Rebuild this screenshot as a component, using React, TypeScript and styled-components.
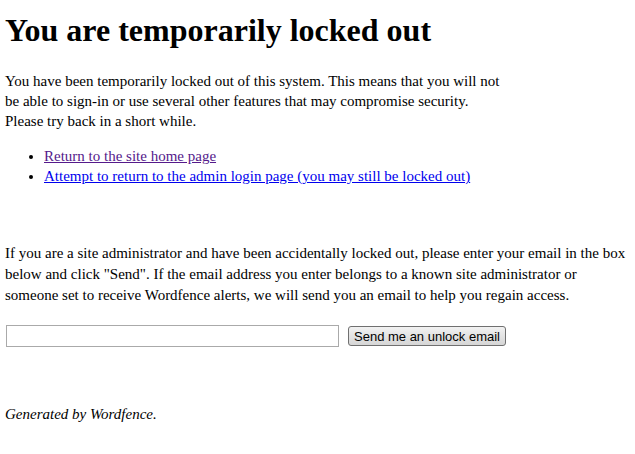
import { FC } from 'react';
import styled, { createGlobalStyle } from 'styled-components';

const GlobalStyle = createGlobalStyle`
  body {
    margin: 0;
    background: #fff;
    color: #000;
    font-family: "Liberation Serif", "Times New Roman", serif;
    font-size: 15px;
  }
`;

const Page = styled.div`
  padding: 0 5px;
`;

const Title = styled.h1`
  font-size: 32px;
  font-weight: bold;
  margin: 12px 0 23px;
  line-height: 36px;
`;

const Intro = styled.p`
  max-width: 495px;
  margin: 0 0 15px;
  line-height: 20px;
`;

const LinkList = styled.ul`
  margin: 0 0 57px;
  padding-left: 39px;
  line-height: 20px;
`;

const Link = styled.a<{ visited?: boolean }>`
  color: ${({ visited }) => (visited ? '#551a8b' : '#0000ee')};
  text-decoration: underline;
`;

const Notice = styled.p`
  margin: 0 0 19px;
  line-height: 21px;
`;

const Form = styled.form`
  display: flex;
  align-items: center;
  gap: 9px;
  margin-left: 1px;
`;

const EmailInput = styled.input`
  width: 333px;
  height: 22px;
  box-sizing: border-box;
  border: 1px solid #aaa;
  padding: 2px;
`;

const SendButton = styled.button`
  height: 20px;
  box-sizing: border-box;
  padding: 0 5px;
  font-family: "Liberation Sans", Arial, sans-serif;
  font-size: 13px;
  color: #000;
  border: 1px solid #707070;
  border-radius: 3px;
  background: linear-gradient(#f2f2f2, #e3e3e3 50%, #d6d6d6);
`;

const Footer = styled.p`
  margin: 59px 0 0;
  font-style: italic;
`;

const App: FC = () => (
  <>
    <GlobalStyle />
    <Page>
      <Title>You are temporarily locked out</Title>
      <Intro>
        You have been temporarily locked out of this system. This means that you will not be able
        to sign-in or use several other features that may compromise security.
        <br />
        Please try back in a short while.
      </Intro>
      <LinkList>
        <li>
          <Link href="#" visited>
            Return to the site home page
          </Link>
        </li>
        <li>
          <Link href="#">Attempt to return to the admin login page (you may still be locked out)</Link>
        </li>
      </LinkList>
      <Notice>
        If you are a site administrator and have been accidentally locked out, please enter your
        email in the box below and click "Send". If the email address you enter belongs to a known
        site administrator or someone set to receive Wordfence alerts, we will send you an email to
        help you regain access.
      </Notice>
      <Form onSubmit={(e) => e.preventDefault()}>
        <EmailInput type="text" />
        <SendButton type="submit">Send me an unlock email</SendButton>
      </Form>
      <Footer>Generated by Wordfence.</Footer>
    </Page>
  </>
);

export default App;
